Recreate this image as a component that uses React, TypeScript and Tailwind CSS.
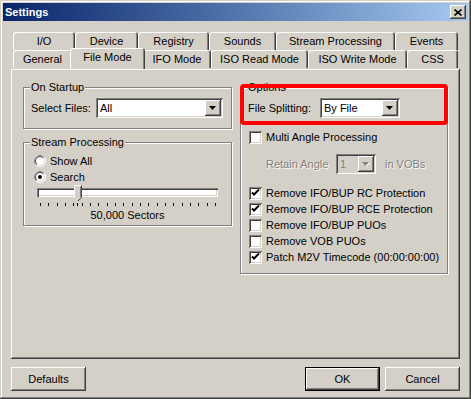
import React from "react";

const FONT = { fontFamily: '"Liberation Sans", Arial, sans-serif' };

const RAISED =
  "shadow-[inset_-1px_-1px_#404040,inset_1px_1px_#ffffff,inset_-2px_-2px_#808080,inset_2px_2px_#d4d0c8]";
const SUNKEN =
  "shadow-[inset_1px_1px_#808080,inset_-1px_-1px_#ffffff,inset_2px_2px_#404040,inset_-2px_-2px_#d4d0c8]";

const ROW1 = [
  { label: "I/O", w: "w-[62px]" },
  { label: "Device", w: "w-[63px]" },
  { label: "Registry", w: "w-[71px]" },
  { label: "Sounds", w: "w-[67px]" },
  { label: "Stream Processing", w: "w-[119px]" },
  { label: "Events", w: "w-[63px]" },
];

const ROW2 = [
  { label: "General", w: "w-[59px]" },
  { label: "File Mode", w: "w-[71px]", active: true },
  { label: "IFO Mode", w: "w-[68px]" },
  { label: "ISO Read Mode", w: "w-[97px]" },
  { label: "ISO Write Mode", w: "w-[99px]" },
  { label: "CSS", w: "w-[51px]" },
];

function Tab({ label, w, active }: { label: string; w: string; active?: boolean }) {
  if (active) {
    return (
      <div className="relative z-10 -mx-[2px] -mt-[2px] flex h-[21px] w-[75px] items-start justify-center rounded-t-[3px] bg-[#d4d0c8] pt-[4px] shadow-[inset_1px_1px_#ffffff,inset_-1px_0_#404040,inset_-2px_0_#808080]">
        {label}
      </div>
    );
  }
  return (
    <div
      className={`${w} flex h-[18px] items-center justify-center rounded-t-[3px] shadow-[inset_1px_1px_#ffffff,inset_-1px_0_#404040,inset_-2px_0_#808080]`}
    >
      {label}
    </div>
  );
}

function Arrow({ disabled }: { disabled?: boolean }) {
  return (
    <svg width="8" height="5" viewBox="0 0 8 5">
      {disabled && <path d="M1 1h7L4.5 4.5z" fill="#ffffff" />}
      <path d="M0 0h7L3.5 4z" fill={disabled ? "#808080" : "#000000"} />
    </svg>
  );
}

function Combo({ value, w, disabled }: { value: string; w: string; disabled?: boolean }) {
  return (
    <div
      className={`${w} ${SUNKEN} flex h-[20px] items-center p-[2px] ${
        disabled ? "bg-[#d4d0c8] text-[#808080]" : "bg-white"
      }`}
    >
      <span className="flex-1 pl-[2px]">{value}</span>
      <div className={`${RAISED} flex h-[16px] w-[16px] items-center justify-center bg-[#d4d0c8]`}>
        <Arrow disabled={disabled} />
      </div>
    </div>
  );
}

function Check({ label, checked }: { label: string; checked?: boolean }) {
  return (
    <div className="flex h-[16px] items-center pl-[8px]">
      <div className={`${SUNKEN} flex h-[13px] w-[13px] items-center justify-center bg-white`}>
        {checked && (
          <svg width="9" height="9" viewBox="0 0 9 9">
            <path d="M1 3.5l2 2L8 0.5" stroke="#000" strokeWidth="2" fill="none" />
          </svg>
        )}
      </div>
      <span className="ml-[4px]">{label}</span>
    </div>
  );
}

function Radio({ id, label, checked }: { id: string; label: string; checked?: boolean }) {
  return (
    <div className="flex h-[16px] items-center pl-[10px]">
      <svg width="12" height="12" viewBox="0 0 12 12">
        <defs>
          <clipPath id={`${id}-tl`}>
            <polygon points="0,0 12,0 0,12" />
          </clipPath>
          <clipPath id={`${id}-br`}>
            <polygon points="12,0 12,12 0,12" />
          </clipPath>
        </defs>
        <circle cx="6" cy="6" r="5.5" fill="#ffffff" stroke="#ffffff" />
        <circle cx="6" cy="6" r="5.5" fill="none" stroke="#808080" clipPath={`url(#${id}-tl)`} />
        <circle cx="6" cy="6" r="4.5" fill="none" stroke="#404040" clipPath={`url(#${id}-tl)`} />
        <circle cx="6" cy="6" r="4.5" fill="none" stroke="#d4d0c8" clipPath={`url(#${id}-br)`} />
        {checked && <circle cx="6" cy="6" r="2" fill="#000000" />}
      </svg>
      <span className="ml-[4px]">{label}</span>
    </div>
  );
}

function Group({ title, className, children }: { title: string; className: string; children: React.ReactNode }) {
  return (
    <div
      className={`relative border border-[#808080] shadow-[1px_1px_0_#ffffff,inset_1px_1px_0_#ffffff] ${className}`}
    >
      <span className="absolute -top-[8px] left-[6px] bg-[#d4d0c8] px-[1px] leading-[14px]">{title}</span>
      {children}
    </div>
  );
}

function Button({ label, def, className = "" }: { label: string; def?: boolean; className?: string }) {
  return (
    <div
      className={`flex h-[24px] w-[75px] items-center justify-center bg-[#d4d0c8] ${
        def
          ? "shadow-[inset_0_0_0_1px_#000000,inset_-2px_-2px_#404040,inset_2px_2px_#ffffff,inset_-3px_-3px_#808080]"
          : RAISED
      } ${className}`}
    >
      {label}
    </div>
  );
}

const TICKS = Array.from({ length: 22 }, (_, i) => i);

export default function App() {
  return (
    <div
      style={FONT}
      className="flex h-[399px] w-[471px] flex-col bg-[#d4d0c8] p-[3px] text-[11px] leading-none text-black shadow-[inset_-1px_-1px_#404040,inset_1px_1px_#d4d0c8,inset_-2px_-2px_#808080,inset_2px_2px_#ffffff]"
    >
      <div className="flex h-[18px] items-center bg-gradient-to-r from-[#0a246a] to-[#a6caf0] pl-[2px] pr-[2px]">
        <span className="flex-1 text-[11px] font-bold text-white">Settings</span>
        <div className={`${RAISED} flex h-[14px] w-[16px] items-center justify-center bg-[#d4d0c8]`}>
          <svg width="8" height="7" viewBox="0 0 8 7">
            <path d="M0.5 0.5l7 6M7.5 0.5l-7 6" stroke="#000" strokeWidth="1.6" />
          </svg>
        </div>
      </div>

      <div className="flex flex-1 flex-col px-[8px] pt-[11px]">
        <div className="flex pl-[2px]">
          {ROW1.map((t) => (
            <Tab key={t.label} label={t.label} w={t.w} />
          ))}
        </div>
        <div className="flex pl-[2px]">
          {ROW2.map((t) => (
            <Tab key={t.label} label={t.label} w={t.w} active={t.active} />
          ))}
        </div>

        <div className={`relative flex h-[290px] w-[449px] gap-[8px] pl-[12px] pt-[18px] ${RAISED}`}>
          <div className="flex w-[209px] flex-col gap-[13px]">
            <Group title="On Startup" className="h-[42px] pl-[7px] pt-[10px]">
              <div className="flex h-[20px] items-center">
                <span className="w-[65px]">Select Files:</span>
                <Combo value="All" w="w-[127px]" />
              </div>
            </Group>

            <Group title="Stream Processing" className="h-[84px] pt-[10px]">
              <Radio id="r1" label="Show All" />
              <Radio id="r2" label="Search" checked />
              <div className="relative ml-[13px] mt-[3px] h-[9px] w-[181px] bg-white shadow-[inset_1px_1px_#808080,inset_2px_2px_#404040,inset_-1px_-1px_#ffffff,inset_-2px_-2px_#d4d0c8]">
                <svg className="absolute -top-[3px] left-[37px]" width="8" height="21" viewBox="0 0 8 21">
                  <path d="M0.5 0.5h7v12l-3.5 3.5l-3.5-3.5z" fill="#d4d0c8" />
                  <path d="M0.5 12.5v-12h7" stroke="#ffffff" fill="none" />
                  <path d="M7.5 0.5v12l-3.5 3.5" stroke="#404040" fill="none" />
                  <path d="M6.5 1.5v10.6" stroke="#808080" fill="none" />
                  <path d="M3.5 18v3" stroke="#000" />
                </svg>
              </div>
              <div className="ml-[16px] mt-[6px] flex w-[176px] justify-between">
                {TICKS.map((i) => (
                  <div key={i} className="h-[3px] w-px bg-black" />
                ))}
              </div>
              <div className="mt-[4px] text-center">50,000 Sectors</div>
            </Group>
          </div>

          <Group title="Options" className="h-[187px] w-[208px] pt-[10px]">
            <div className="flex h-[20px] items-center pl-[7px]">
              <span className="w-[72px]">File Splitting:</span>
              <Combo value="By File" w="w-[80px]" />
            </div>
            <div className="mt-[11px]">
              <Check label="Multi Angle Processing" />
            </div>
            <div className="mt-[9px] flex h-[20px] items-center pl-[25px] text-[#808080]">
              <span className="w-[70px] [text-shadow:1px_1px_0_#ffffff]">Retain Angle</span>
              <Combo value="1" w="w-[40px]" disabled />
              <span className="ml-[9px] [text-shadow:1px_1px_0_#ffffff]">in VOBs</span>
            </div>
            <div className="mt-[11px] flex flex-col">
              <Check label="Remove IFO/BUP RC Protection" checked />
              <Check label="Remove IFO/BUP RCE Protection" checked />
              <Check label="Remove IFO/BUP PUOs" />
              <Check label="Remove VOB PUOs" />
              <Check label="Patch M2V Timecode (00:00:00:00)" checked />
            </div>
          </Group>

          <div className="pointer-events-none absolute left-[229px] top-[15px] h-[41px] w-[208px] rounded-[4px] border-4 border-[#ff0000]" />
        </div>

        <div className="mt-[8px] flex w-[449px]">
          <Button label="Defaults" />
          <div className="flex-1" />
          <Button label="OK" def />
          <Button label="Cancel" className="ml-[5px]" />
        </div>
      </div>
    </div>
  );
}
